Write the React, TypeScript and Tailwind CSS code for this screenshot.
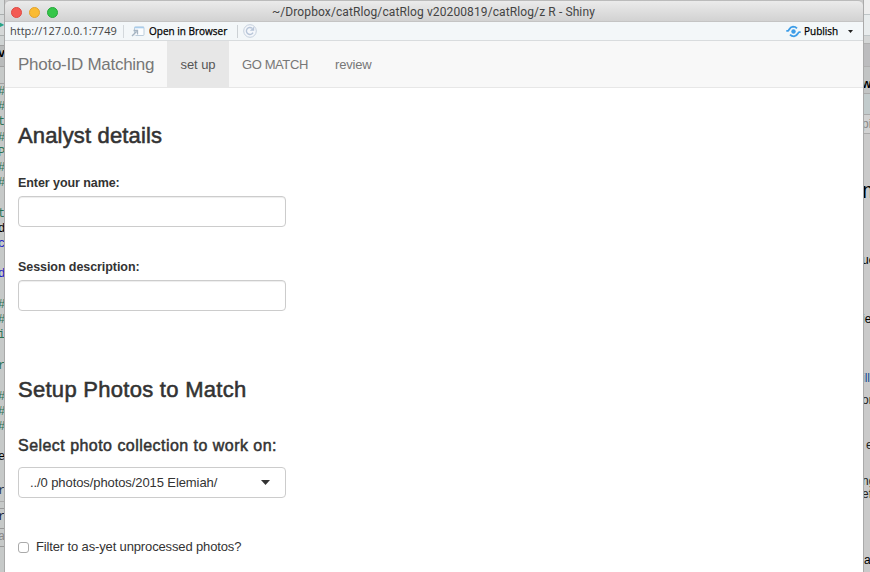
import React from "react";

type Row = [string, string];

const leftRows: Row[] = [
  ["h-[14px] bg-[#d9dcdc]", ""],
  ["h-[22px] border-y border-[#a9aeae] bg-[#d5d8d8] pt-[2px] text-[#2fa37c]", "▸"],
  ["h-[9px] bg-[#cfd3d3]", ""],
  ["h-[22px] border-y border-[#a0a0a0] bg-[#b9bbbb] text-black font-bold", "v"],
  ["h-[17px] border-b border-[#a0a0a0]", ""],
  ["h-[15px] text-[#2c7356]", "#"],
  ["h-[15px] text-[#2c7356]", "#"],
  ["h-[16px] text-[#2c7356]", "t"],
  ["h-[15px] text-[#2c7356]", "#"],
  ["h-[15px] text-[#2c7356]", "P"],
  ["h-[15px] text-[#2c7356]", "#"],
  ["h-[31px] text-[#2c7356]", "#"],
  ["h-[15px] text-[#2c7356]", "t"],
  ["h-[15px] text-black", "d"],
  ["h-[30px] text-[#2424c4]", "c"],
  ["h-[31px] text-[#2424c4]", "d"],
  ["h-[15px] text-[#2c7356]", "#"],
  ["h-[15px] text-[#2c7356]", "#"],
  ["h-[31px] text-[#2c7356]", "i"],
  ["h-[31px] text-[#2c7356]", "r"],
  ["h-[15px] text-[#2c7356]", "#"],
  ["h-[15px] text-[#2c7356]", "#"],
  ["h-[30px] text-[#2c7356]", "#"],
  ["h-[34px] text-black", "e"],
  ["h-[18px] text-[#26384b]", "r"],
  ["h-[7px] border-t border-[#aaa]", ""],
  ["h-[21px] border-y border-[#999] text-[#15233b]", "r"],
  ["h-[18px] border-b border-[#999] text-[#888]", "a"],
];

const rightRows: Row[] = [
  ["h-[14px] bg-[#eeeeee]", ""],
  ["h-[22px] border-y border-[#bfc6c8] bg-[#e8eced]", ""],
  ["h-[7px] bg-[#d4d6d6]", ""],
  ["h-[24px] border-y border-[#b0b0b0] bg-[#bcbcbe]", ""],
  ["h-[27px] border-b border-[#aaa] bg-[#c2c4c4] pt-[10px] font-bold text-black", "we"],
  ["h-[20px] bg-[#c2cbcc]", ""],
  ["h-[20px] border-y border-[#aaa] bg-[#d2d2d2] pt-[2px] text-[#888]", "pi"],
  ["h-[47px]", ""],
  ["h-[72px] pt-[3px] text-[22px] text-black", "m"],
  ["h-[59px] text-black", "ue"],
  ["h-[59px] text-black", "ie"],
  ["h-[22px] text-[#164a93]", "ill"],
  ["h-[45px] text-[#222]", "or"],
  ["h-[36px] pl-[4px] text-[#222]", "e"],
  ["h-[13px] text-[#222]", "ng"],
  ["h-[66px] text-[#222]", "ef"],
  ["h-[19px] pl-[2px] text-black", "a"],
];

function Strip({ rows, className }: { rows: Row[]; className: string }) {
  return (
    <div className={`shrink-0 overflow-hidden ${className}`}>
      {rows.map(([style, text], i) => (
        <div key={i} className={`box-border whitespace-nowrap ${style}`}>
          <span className="-ml-[2px]">{text}</span>
        </div>
      ))}
    </div>
  );
}

function OpenIcon() {
  return (
    <svg width="15" height="13" viewBox="0 0 15 13" fill="none">
      <rect x="3.500" y="2" width="9.500" height="8.500" rx="1" fill="#fbfdff" stroke="#bccddb" />
      <path d="M3.500 2.500h9.500" stroke="#a9cdec" strokeWidth="1.600" />
      <path d="M.5 11 4.500 7v4z" fill="#e8eef3" stroke="none" />
      <path d="M1 11 5.500 6.500M2.500 5.500h4v4" stroke="#a5b3c0" strokeWidth="1.300" />
    </svg>
  );
}

function ReloadIcon() {
  return (
    <svg width="14" height="14" viewBox="0 0 14 14" fill="none">
      <circle cx="7" cy="7" r="6.300" fill="#f4f7fb" stroke="#c5d0dd" />
      <path d="M10 8.600A3.500 3.500 0 1 1 9.200 4.300" stroke="#b7c5d8" strokeWidth="1.400" />
      <path d="M11.200 2.500v4.300H6.900z" fill="#b7c5d8" />
    </svg>
  );
}

function PublishIcon() {
  return (
    <svg width="15" height="13" viewBox="0 0 15 13" fill="none" stroke="#3d9de8" strokeWidth="1.800">
      <circle cx="7.500" cy="6.500" r="2.200" fill="#3d9de8" stroke="none" />
      <path d="M.3 5.800H2C3 5.800 3.200 2 7 1.700c1.800 0 3 .6 4 1.700M14.700 7.200H13c-1 0-1.200 3.800-5 4.100-1.800 0-3-.6-4-1.700" />
    </svg>
  );
}

export default function App() {
  return (
    <div className="flex h-[572px] w-[870px] overflow-hidden bg-[#cacaca] font-['Liberation_Sans',Arial,sans-serif] text-[#333]">
      <Strip rows={leftRows} className="w-[5px] border-r border-[#a9a9a9] bg-[#c6c9c8] font-['Liberation_Mono',monospace] text-[12px] leading-[16px]" />
      <main className="flex w-[858px] shrink-0 flex-col">
        <header className="flex h-[22px] shrink-0 items-center rounded-t-[5px] border-t border-b border-t-[#bbb] border-b-[#c4c4c4] bg-linear-to-b from-[#ebebeb] to-[#d2d2d2] pt-[2px]">
          <div className="flex w-[62px] gap-[7px] pl-[6px]">
            <i className="size-[11px] rounded-full border border-[#df4942] bg-[#f35a53]" />
            <i className="size-[11px] rounded-full border border-[#e3a22c] bg-[#fabb32]" />
            <i className="size-[11px] rounded-full border border-[#25a83a] bg-[#35c649]" />
          </div>
          <div className="pl-[205px] font-['Roboto',sans-serif] text-[12px] tracking-[0.17px] text-[#444]">
            <svg width="330" height="18" className="overflow-visible">
              <text x="0" y="13" textLength="323" fill="#444">~/Dropbox/catRlog/catRlog v20200819/catRlog/z R - Shiny</text>
            </svg>
          </div>
        </header>
        <div className="flex h-[19px] shrink-0 items-center border-b border-[#d9dcde] bg-[#f3f7f9] pl-[5px] font-['Open_Sans',sans-serif] text-[11px] text-black">
          <span className="w-[108px] shrink-0 text-[#444]">http://127.0.0.1:7749</span>
          <i className="mr-[7px] ml-[5px] h-[13px] w-px bg-[#d3d8dc]" />
          <OpenIcon />
          <span className="ml-[3px] w-[88px] shrink-0 whitespace-nowrap text-[10px] [-webkit-text-stroke:0.25px_#000]">Open in Browser</span>
          <i className="mr-[5px] h-[13px] w-px bg-[#ccd1d5]" />
          <ReloadIcon />
          <span className="flex-1" />
          <PublishIcon />
          <span className="ml-[3px] w-[44px] text-[10px] [-webkit-text-stroke:0.25px_#000]">Publish</span>
          <svg width="5" height="3" className="mr-[10px]"><path d="M0 0h5L2.500 3z" fill="#222" /></svg>
        </div>
        <nav className="flex h-[47px] shrink-0 items-center border-b border-[#e7e7e7] bg-[#f8f8f8] text-[13px] text-[#777]">
          <div className="w-[162px] pt-[2px] pl-[13px] text-[17px] tracking-[-0.27px] whitespace-nowrap">Photo-ID Matching</div>
          <div className="flex h-full w-[62px] items-center justify-center bg-[#e7e7e7] pt-[2px] tracking-[-0.1px] text-[#555]">set up</div>
          <div className="w-[93px] pt-[2px] pl-[13px] tracking-[-0.4px]">GO MATCH</div>
          <div className="pt-[2px] pl-[13px] tracking-[-0.2px]">review</div>
        </nav>
        <form className="flex flex-1 flex-col items-start bg-white pl-[13px] text-[13px]">
          <h2 className="mt-[35px] text-[22px] leading-[26px] tracking-[0.16px] [-webkit-text-stroke:0.55px_#333]">Analyst details</h2>
          <label className="mt-[25px] text-[12.5px] leading-[18px] font-bold tracking-[-0.07px]">Enter your name:</label>
          <input className="mt-[4px] h-[31px] w-[268px] rounded-[4px] border border-[#ccc] bg-white shadow-[inset_0_1px_1px_#00000013]" />
          <label className="mt-[31px] text-[12.5px] leading-[18px] font-bold tracking-[-0.07px]">Session description:</label>
          <input className="mt-[4px] h-[31px] w-[268px] rounded-[4px] border border-[#ccc] bg-white shadow-[inset_0_1px_1px_#00000013]" />
          <h2 className="mt-[66px] text-[22px] leading-[26px] tracking-[0.28px] [-webkit-text-stroke:0.55px_#333]">Setup Photos to Match</h2>
          <h4 className="mt-[33px] text-[16px] leading-[20px] tracking-[0.46px] [-webkit-text-stroke:0.5px_#333]">Select photo collection to work on:</h4>
          <div className="mt-[11px] flex h-[31px] w-[268px] items-center justify-between rounded-[4px] border border-[#ccc] pr-[15px] pl-[11px]">
            <span className="tracking-[-0.09px]">../0 photos/photos/2015 Elemiah/</span>
            <svg width="9" height="5"><path d="M0 0h9L4.500 5z" fill="#333" /></svg>
          </div>
          <label className="mt-[40px] flex h-[18px] items-center gap-[7px] tracking-[-0.14px]">
            <input type="checkbox" className="size-[11px] appearance-none rounded-[3px] border border-[#aaa] bg-white" />
            Filter to as-yet unprocessed photos?
          </label>
        </form>
      </main>
      <Strip rows={rightRows} className="w-[7px] border-l border-[#aaa] bg-[#cacaca] text-[12px] leading-[14px]" />
    </div>
  );
}
